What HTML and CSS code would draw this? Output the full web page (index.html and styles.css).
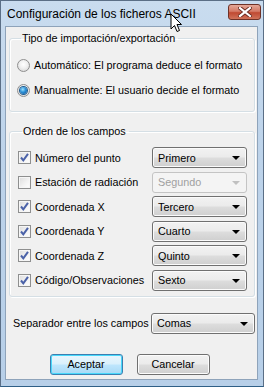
FILE: index.html
```html
<!DOCTYPE html>
<html lang="es">
<head>
  <meta charset="UTF-8" />
  <meta name="viewport" content="width=device-width, initial-scale=1.0" />
  <title>Configuración de los ficheros ASCII</title>
  <link rel="stylesheet" href="styles.css">
</head>
<body>
  <div class="window">
    <div class="titlebar">
      <span class="title">Configuración de los ficheros ASCII</span>
      <button class="close" type="button">
        <svg width="14" height="10" viewBox="0 0 14 10">
          <path d="M2 1 L12 9 M12 1 L2 9" stroke="#6a2a20" stroke-width="4" stroke-linecap="square" />
          <path d="M2 1 L12 9 M12 1 L2 9" stroke="#fff" stroke-width="2.2" stroke-linecap="square" />
        </svg>
      </button>
      <svg class="cursor" width="13" height="20" viewBox="0 0 13 20">
        <path d="M1 1 L1 16 L4.5 12.5 L7 18.5 L9.5 17.5 L7 11.5 L11.5 11.5 Z" fill="#fff" stroke="#000" stroke-width="1" stroke-linejoin="miter" />
      </svg>
    </div>

    <div class="client">
      <fieldset class="group group-type">
        <legend>Tipo de importación/exportación</legend>
        <label class="radio-row">
          <span class="radio"></span>
          Automático: El programa deduce el formato
        </label>
        <label class="radio-row">
          <span class="radio checked"></span>
          Manualmente: El usuario decide el formato
        </label>
      </fieldset>

      <fieldset class="group group-order">
        <legend>Orden de los campos</legend>

        <div class="field-row">
          <label class="check-label"><span class="check checked"></span>Número del punto</label>
          <div class="combo">Primero<span class="arrow"></span></div>
        </div>
        <div class="field-row">
          <label class="check-label"><span class="check"></span>Estación de radiación</label>
          <div class="combo disabled">Segundo<span class="arrow"></span></div>
        </div>
        <div class="field-row">
          <label class="check-label"><span class="check checked"></span>Coordenada X</label>
          <div class="combo">Tercero<span class="arrow"></span></div>
        </div>
        <div class="field-row">
          <label class="check-label"><span class="check checked"></span>Coordenada Y</label>
          <div class="combo">Cuarto<span class="arrow"></span></div>
        </div>
        <div class="field-row">
          <label class="check-label"><span class="check checked"></span>Coordenada Z</label>
          <div class="combo">Quinto<span class="arrow"></span></div>
        </div>
        <div class="field-row">
          <label class="check-label"><span class="check checked"></span>Código/Observaciones</label>
          <div class="combo">Sexto<span class="arrow"></span></div>
        </div>
      </fieldset>

      <div class="separator-row">
        <span class="separator-label">Separador entre los campos</span>
        <div class="combo wide">Comas<span class="arrow"></span></div>
      </div>

      <div class="buttons">
        <button class="btn default" type="button">Aceptar</button>
        <button class="btn" type="button">Cancelar</button>
      </div>
    </div>
  </div>
</body>
</html>
```

FILE: styles.css
```css
body {
  margin: 0;
  background-color: #fff;
  font-family: 'Liberation Sans', Arial, sans-serif;
  font-size: 10.8px;
  color: #000;
  white-space: nowrap;
}

.window {
  width: 264px;
  height: 387px;
  box-sizing: border-box;
  display: flex;
  flex-direction: column;
  padding: 0 5px 6px 4px;
  border: 1px solid #5b6f86;
  border-bottom-color: #2f5f86;
  background: linear-gradient(to bottom, #c9dcef 0%, #bdd3ea 40%, #b7cfe8 100%);
}

.titlebar {
  position: relative;
  height: 25px;
  flex: none;
}

.title {
  display: block;
  padding: 6px 0 0 2px;
  font-size: 12px;
  color: #000;
}

.close {
  position: absolute;
  top: 3px;
  right: -3px;
  width: 33px;
  height: 16px;
  padding: 0;
  display: flex;
  align-items: center;
  justify-content: center;
  border: 1px solid #6e3227;
  border-radius: 3px;
  background: linear-gradient(to bottom, #e4a898 0%, #d47a66 45%, #c04a32 55%, #d0735a 100%);
}

.cursor {
  position: absolute;
  left: 165px;
  top: 12px;
}

.client {
  flex: 1;
  display: flex;
  flex-direction: column;
  padding: 4px 2px 0 3px;
  background-color: #f0f0f0;
  border: 1px solid #8ea3ba;
}

.group {
  margin: 0;
  border: 1px solid #d5dfe5;
  border-radius: 3px;
  box-shadow: inset 1px 1px 0 #fff, 1px 1px 0 #fff;
}

.group legend {
  padding: 0 3px 0 1px;
  margin-left: 4px;
  line-height: 14px;
  color: #000;
}

.group-type {
  padding: 12px 8px 13px 7px;
  display: flex;
  flex-direction: column;
  gap: 9px;
}

.radio-row {
  display: flex;
  align-items: center;
  gap: 4px;
  height: 16px;
}

.radio {
  width: 13px;
  height: 13px;
  box-sizing: border-box;
  border-radius: 50%;
  border: 1px solid #8f8f8f;
  background: radial-gradient(circle at 50% 40%, #fff 0%, #f0f0f0 45%, #cfcfcf 100%);
  display: flex;
  align-items: center;
  justify-content: center;
}

.radio.checked::after {
  content: '';
  width: 7px;
  height: 7px;
  border-radius: 50%;
  background: radial-gradient(circle at 40% 35%, #9fe3ff 0%, #2a8fd6 45%, #0b4e94 100%);
  box-shadow: 0 0 0 1px #1f5b8e;
}

.group-order {
  margin-top: 12px;
  padding: 9px 7px 5px 8px;
  display: flex;
  flex-direction: column;
  gap: 3.6px;
}

.field-row {
  display: flex;
  align-items: center;
  justify-content: space-between;
  height: 21px;
}

.check-label {
  display: flex;
  align-items: center;
  gap: 4px;
}

.check {
  width: 13px;
  height: 13px;
  box-sizing: border-box;
  border: 1px solid #8e8f8f;
  background: linear-gradient(135deg, #dcdcdc 0%, #f4f4f4 60%, #fff 100%);
  box-shadow: inset 0 0 0 1px #f6f6f6;
}

.check.checked {
  background-image:
    url("data:image/svg+xml;utf8,<svg xmlns='http://www.w3.org/2000/svg' width='11' height='11' viewBox='0 0 11 11'><path d='M2 5.5 L4.3 8.3 L9 1.8' fill='none' stroke='%234b62a8' stroke-width='2'/></svg>"),
    linear-gradient(135deg, #dcdcdc 0%, #f4f4f4 60%, #fff 100%);
  background-repeat: no-repeat;
  background-position: center;
}

.combo {
  position: relative;
  width: 95px;
  height: 21px;
  box-sizing: border-box;
  padding: 0 0 0 5px;
  display: flex;
  align-items: center;
  border: 1px solid #707070;
  border-radius: 3px;
  background: linear-gradient(to bottom, #f2f2f2 0%, #ebebeb 48%, #dddddd 52%, #cfcfcf 100%);
  box-shadow: inset 0 0 0 1px #fbfbfb;
}

.combo .arrow {
  position: absolute;
  right: 6px;
  top: 8px;
  width: 0;
  height: 0;
  border-left: 4px solid transparent;
  border-right: 4px solid transparent;
  border-top: 4px solid #000;
}

.combo.disabled {
  color: #a0a0a0;
  border-color: #c4c4c4;
  background: #f4f4f4;
  box-shadow: none;
}

.combo.disabled .arrow {
  border-top-color: #c0c0c0;
}

.combo.wide {
  width: 104px;
}

.separator-row {
  margin-top: 16px;
  display: flex;
  align-items: center;
  justify-content: space-between;
  padding-left: 4px;
}

.buttons {
  margin-top: 20px;
  display: flex;
  justify-content: center;
  gap: 14px;
  padding-right: 5px;
}

.btn {
  width: 73px;
  height: 21px;
  padding: 0;
  font-family: inherit;
  font-size: 10.8px;
  color: #000;
  border: 1px solid #707070;
  border-radius: 3px;
  background: linear-gradient(to bottom, #f2f2f2 0%, #ebebeb 48%, #dddddd 52%, #cfcfcf 100%);
  box-shadow: inset 0 0 0 1px #fcfcfc;
}

.btn.default {
  border-color: #3c7fb1;
  background: linear-gradient(to bottom, #eaf6fd 0%, #d9f0fc 48%, #bee6fd 52%, #a7d9f5 100%);
  box-shadow: inset 0 0 0 1px #48d8fb;
}
```
